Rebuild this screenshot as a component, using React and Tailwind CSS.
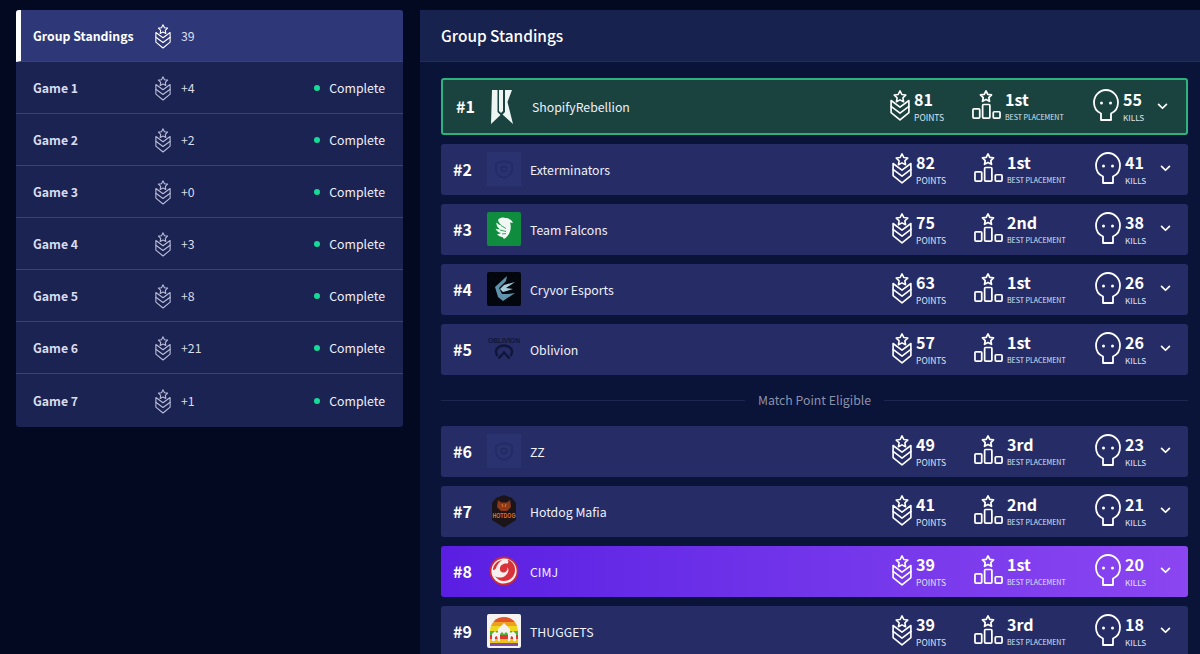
const FONT = '"Noto Sans CJK JP", "Noto Sans", sans-serif';

function RankIcon({ className, sw = 1.8 }) {
  return (
    <svg viewBox="0 0 22 34" fill="none" stroke="currentColor" strokeWidth={sw} strokeLinejoin="round" strokeLinecap="round" className={className}>
      <path d="M11 1l2 3.900 4.300.6-3.100 3 .7 4.300-3.900-2-3.900 2 .7-4.300-3.100-3 4.300-.6z" />
      <path d="M1.200 11.500v13.300L11 32.800l9.800-8V11.500L11 18.800z" />
      <path d="M1.200 18L11 25.300 20.800 18" />
    </svg>
  );
}

function PodiumIcon({ className }) {
  return (
    <svg viewBox="0 0 30 30" fill="none" stroke="currentColor" strokeWidth="1.800" strokeLinejoin="round" className={className}>
      <path d="M14.500 1l1.800 3.500 3.900.6-2.800 2.700.7 3.900-3.600-1.900-3.600 1.900.7-3.900-2.800-2.700 3.900-.6z" />
      <rect x="1" y="19.500" width="7" height="9.500" rx="1" />
      <rect x="11" y="15" width="7.500" height="14" rx="1" />
      <rect x="22" y="22.500" width="7" height="6.500" rx="1" />
    </svg>
  );
}

function SkullIcon({ className }) {
  return (
    <svg viewBox="0 0 26 32" fill="none" stroke="currentColor" strokeWidth="1.800" strokeLinejoin="round" className={className}>
      <path d="M8 31v-6.500C3.500 22.500 1 18.500 1 13.500 1 6.500 6.500 1 13 1s12 5.500 12 12.500c0 5-2.500 9-7 11V31z" />
      <circle cx="8.500" cy="14" r="1.500" fill="currentColor" stroke="none" />
      <circle cx="17.500" cy="14" r="1.500" fill="currentColor" stroke="none" />
    </svg>
  );
}

function Chevron() {
  return (
    <svg viewBox="0 0 12 8" fill="none" stroke="currentColor" strokeWidth="2" strokeLinecap="round" strokeLinejoin="round" className="w-[11px] h-[7px] text-white">
      <path d="M1.500 1.500L6 6l4.500-4.500" />
    </svg>
  );
}

function LogoShopify() {
  return (
    <svg viewBox="0 0 22 34" className="w-[22px] h-[34px]">
      <path d="M1 0h5.500v22l3 3L0 34z" fill="#eef6f4" />
      <path d="M8 0h4v21l-2 2-2-2z" fill="#eef6f4" />
      <path d="M14 0h7l-4.500 12L22 34l-10.500-9.500L14 22z" fill="#eef6f4" />
    </svg>
  );
}

function LogoPlaceholder() {
  return (
    <svg viewBox="0 0 34 34" className="w-full h-full">
      <rect width="34" height="34" fill="#2a3270" />
      <path d="M17 9l8 2.500v7c0 3.500-3.500 6-8 7.500-4.500-1.500-8-4-8-7.500v-7z" fill="none" stroke="#232b64" strokeWidth="1.500" />
      <circle cx="17" cy="17" r="2.600" fill="none" stroke="#232b64" strokeWidth="1.500" />
    </svg>
  );
}

function LogoFalcons() {
  return (
    <svg viewBox="0 0 34 34" className="w-full h-full">
      <rect width="34" height="34" rx="2" fill="#0f8c3e" />
      <path d="M11 8c1-2 4-3 7-2 4 0 7 2 8 5l-3-.5c1 3 1 6 0 9-1 3-3 6-6 7.500l-1.500-2c-2 0-4-1-5.500-3 1.500 0 3-.2 4-1-2.500-.5-4.500-2-5.500-4.500 1.500.8 3 1 4.500.8C10.500 15.500 9 13 9.500 10.500c1.500 1.500 3 2.500 5 3C13 12 11.500 10 11 8z" fill="#f1f7f2" />
      <path d="M14 13.500l5 3M13 18l6 1.500M15 22l4-.5" stroke="#0f8c3e" strokeWidth="0.800" fill="none" />
    </svg>
  );
}

function LogoCryvor() {
  return (
    <svg viewBox="0 0 34 34" className="w-full h-full">
      <rect width="34" height="34" rx="2" fill="#03060c" />
      <path d="M20 4L8 15l3 10 5 4 12-8-8 1-5 0-3-6 7-7z" fill="#5f93ab" />
      <path d="M28 10l-11 3-4 4 3 3 10-3-7-1z" fill="#a5cddb" />
    </svg>
  );
}

function LogoOblivion() {
  return (
    <svg viewBox="0 0 34 34" className="w-full h-full">
      <text x="17" y="10.500" textAnchor="middle" fontSize="6.500" fontWeight="900" textLength="32" lengthAdjust="spacingAndGlyphs" fill="#10163a" fontFamily="Liberation Sans, sans-serif">OBLIVION</text>
      <path d="M10.500 24c-1-1.500-1.500-3-1.500-4.500a8 6 0 0 1 16 0c0 1.500-.5 3-1.500 4.500" fill="none" stroke="#10163a" strokeWidth="2.400" />
      <path d="M11.500 26.500l5.500-6 5.500 6" fill="none" stroke="#10163a" strokeWidth="2.400" />
    </svg>
  );
}

function LogoHotdog() {
  return (
    <svg viewBox="0 0 34 34" className="w-full h-full">
      <path d="M17 1l8 3 4 5v17l-12 7.500L5 26V9l4-5z" fill="#1b1418" />
      <path d="M11 6l3 2.500h6L23 6l1 7-4 4h-6l-4-4z" fill="#8d3a1c" />
      <path d="M15 10l1 3M19 10l-1 3" stroke="#e2701e" strokeWidth="1" />
      <text x="17" y="24" textAnchor="middle" fontSize="6.500" fontWeight="900" textLength="23" lengthAdjust="spacingAndGlyphs" fill="#e2701e" fontFamily="Liberation Sans, sans-serif">HOTDOG</text>
    </svg>
  );
}

function LogoCimj() {
  return (
    <svg viewBox="0 0 34 34" className="w-full h-full">
      <circle cx="17" cy="17" r="13.500" fill="#f7efef" stroke="#cb2a34" strokeWidth="1.800" />
      <path d="M22 6c4 2 6.500 6 6 11-.5 5.500-5 10-11 10-4 0-7-2-9-5 3 2 7 2 10 0 3-2 4.500-6 2.500-9 .5 3-1.500 5.500-4 5.500s-4-2-3.500-4.500c.5-3.500 4-5 7.500-4.500 1 0 1-2 .5-3.500z" fill="#d8323b" />
      <path d="M6 16c0-5 4-9 9-10-3 2-5 5-6 8-.5 1.500-2 2-3 2z" fill="#d8323b" />
    </svg>
  );
}

function LogoThuggets() {
  return (
    <svg viewBox="0 0 34 34" className="w-full h-full">
      <defs>
        <linearGradient id="rainbow" x1="0" y1="0" x2="0" y2="1">
          <stop offset="0" stopColor="#e2552b" />
          <stop offset="0.16" stopColor="#e2552b" />
          <stop offset="0.16" stopColor="#f0a020" />
          <stop offset="0.32" stopColor="#f0a020" />
          <stop offset="0.32" stopColor="#ecd81f" />
          <stop offset="0.48" stopColor="#ecd81f" />
          <stop offset="0.48" stopColor="#58b03c" />
          <stop offset="0.62" stopColor="#58b03c" />
          <stop offset="0.62" stopColor="#e0372e" />
          <stop offset="0.76" stopColor="#e0372e" />
          <stop offset="0.76" stopColor="#efc31f" />
          <stop offset="0.88" stopColor="#efc31f" />
          <stop offset="0.88" stopColor="#7a4fb0" />
          <stop offset="1" stopColor="#7a4fb0" />
        </linearGradient>
      </defs>
      <rect width="34" height="34" rx="2" fill="#f5f3f1" />
      <path d="M3 32V18C3 9 9 3 17 3s14 6 14 15v14z" fill="url(#rainbow)" />
      <path d="M5 27v-7l3-3 2 2 1-1v-3l3-3 3-3 3 3 3 3v3l1 1 2-2 3 3v7h-3v-4l-2-1-1 5h-2v-7l-2-2-2 2-2-2-2 2v7h-2l-1-5-2 1v4z" fill="#f5f3f1" />
    </svg>
  );
}

const rows = [
  { rank: 2, name: 'Exterminators', logo: <LogoPlaceholder />, pts: 82, place: '1st', kills: 41 },
  { rank: 3, name: 'Team Falcons', logo: <LogoFalcons />, pts: 75, place: '2nd', kills: 38 },
  { rank: 4, name: 'Cryvor Esports', logo: <LogoCryvor />, pts: 63, place: '1st', kills: 26 },
  { rank: 5, name: 'Oblivion', logo: <LogoOblivion />, pts: 57, place: '1st', kills: 26 },
];
const rows2 = [
  { rank: 6, name: 'ZZ', logo: <LogoPlaceholder />, pts: 49, place: '3rd', kills: 23 },
  { rank: 7, name: 'Hotdog Mafia', logo: <LogoHotdog />, pts: 41, place: '2nd', kills: 21 },
  { rank: 8, name: 'CIMJ', logo: <LogoCimj />, pts: 39, place: '1st', kills: 20, purple: true },
  { rank: 9, name: 'THUGGETS', logo: <LogoThuggets />, pts: 39, place: '3rd', kills: 18 },
];
const games = [['Game 1', '+4'], ['Game 2', '+2'], ['Game 3', '+0'], ['Game 4', '+3'], ['Game 5', '+8'], ['Game 6', '+21'], ['Game 7', '+1']];

function Stat({ value, label, labelClass }) {
  return (
    <div className="flex flex-col -mt-[2px]">
      <span className="text-[16px] leading-[20px] font-bold text-white">{value}</span>
      <span className={`leading-[12px] mt-[2px] uppercase text-[#dfe3f2] ${labelClass}`}>{label}</span>
    </div>
  );
}

function Stats({ label }) {
  return (
    <div className="flex items-center text-white">
      <div className="w-[82px] flex items-center gap-[4px]">
        <RankIcon className="w-[20px] h-[31px] -mt-[2px]" />
        <Stat value={label.pts} label="Points" labelClass="text-[8.500px]" />
      </div>
      <div className="w-[121px] flex items-center gap-[4px]">
        <PodiumIcon className="w-[29px] h-[29px] -mt-[4px]" />
        <Stat value={label.place} label="Best Placement" labelClass="text-[7px]" />
      </div>
      <div className="w-[57px] flex items-center gap-[4px]">
        <SkullIcon className="w-[26px] h-[32px] -mt-[3px]" />
        <Stat value={label.kills} label="Kills" labelClass="text-[8.200px]" />
      </div>
    </div>
  );
}

function Row({ r }) {
  return (
    <div className={`h-[51px] rounded-[3px] flex items-center pl-[12px] pr-[17px] ${r.purple ? 'bg-gradient-to-r from-[#5a1ee2] to-[#8b45f1]' : 'bg-[#262d66]'}`}>
      <span className="w-[34px] text-[16px] font-bold text-white -mt-[2px]">#{r.rank}</span>
      <div className="w-[34px] h-[34px] shrink-0 -mt-[1px]">{r.logo}</div>
      <span className="ml-[9px] text-[12.300px] text-[#eef0fa] flex-1 mt-[1px]">{r.name}</span>
      <Stats label={r} />
      <div className="ml-[8px] w-[11px] flex -mt-[2px]"><Chevron /></div>
    </div>
  );
}

function GameRow({ name, value, active, complete }) {
  return (
    <div className={`h-[52px] last:h-[53px] flex items-center border-b border-[#3a4275] last:border-b-0 pt-[1px] ${active ? 'bg-[#2e3878] border-l-[5px] border-l-white pl-[12px]' : 'pl-[17px]'} pr-[18px]`}>
      <span className={`w-[122px] text-[12.300px] font-bold ${active ? 'text-white' : 'text-[#d9dcec]'}`}>{name}</span>
      <RankIcon sw={1.5} className={`w-[16px] h-[25px] ${active ? 'text-white' : 'text-[#b9bdd8]'}`} />
      <span className="ml-[10px] text-[12.300px] text-[#d9dcec]">{value}</span>
      {complete && (
        <div className="ml-auto flex items-center gap-[9px]">
          <span className="w-[6px] h-[6px] rounded-full bg-[#14dc96]" />
          <span className="text-[12.300px] text-[#eef0fa]">Complete</span>
        </div>
      )}
    </div>
  );
}

export default function App() {
  return (
    <div className="h-[654px] overflow-hidden bg-[#020920] flex items-start pt-[10px] pl-[16px]" style={{ fontFamily: FONT }}>
      <div className="w-[387px] rounded-[3px] overflow-hidden bg-[#1b2353]">
        <GameRow name="Group Standings" value="39" active />
        {games.map(([n, v]) => <GameRow key={n} name={n} value={v} complete />)}
      </div>
      <div className="ml-[17px] flex-1 bg-[#0a1338] rounded-tl-[3px] min-h-[660px]">
        <div className="h-[52px] bg-[#18224f] flex items-center pl-[21px] border-b border-[#232c5c]">
          <span className="text-[15.400px] font-medium text-white">Group Standings</span>
        </div>
        <div className="pt-[16px] pl-[21px] pr-[12px]">
          <div className="h-[57px] rounded-[3px] border-2 border-[#2fb37e] bg-[#1a433f] flex items-center pl-[13px] pr-[18px] mb-[9px]">
            <span className="w-[33px] text-[16px] font-bold text-white -mt-[2px]">#1</span>
            <div className="w-[24px] flex justify-center ml-[1px]"><LogoShopify /></div>
            <span className="ml-[18px] text-[12.300px] text-[#eef0fa] flex-1 mt-[1px]">ShopifyRebellion</span>
            <Stats label={{ pts: 81, place: '1st', kills: 55 }} />
            <div className="ml-[7px] w-[11px] flex"><Chevron /></div>
          </div>
          <div className="flex flex-col gap-[9px]">
            {rows.map(r => <Row key={r.rank} r={r} />)}
          </div>
          <div className="h-[51px] flex items-center gap-[13px]">
            <div className="flex-1 h-px bg-[#1e2750]" />
            <span className="text-[12.300px] text-[#8b91a9]">Match Point Eligible</span>
            <div className="flex-1 h-px bg-[#1e2750]" />
          </div>
          <div className="flex flex-col gap-[9px]">
            {rows2.map(r => <Row key={r.rank} r={r} />)}
          </div>
        </div>
      </div>
    </div>
  );
}
